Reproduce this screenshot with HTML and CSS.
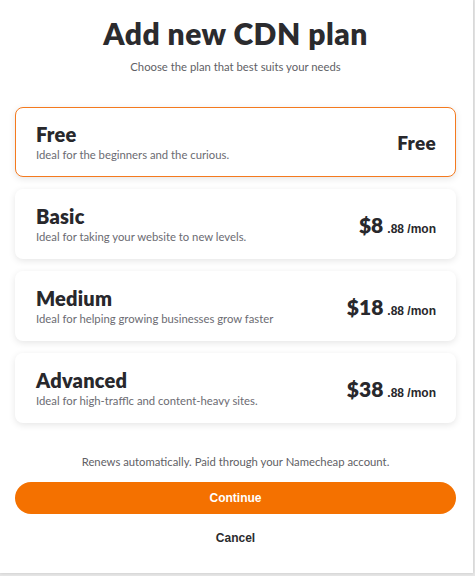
FILE: index.html
```html
<!DOCTYPE html>
<html>
<head>
<meta charset="utf-8">
<link rel="stylesheet" href="styles.css">
</head>
<body>
<div class="dialog">
  <h1 class="title">Add new CDN plan</h1>
  <p class="subtitle">Choose the plan that best suits your needs</p>
  <div class="plans">
    <div class="plan selected">
      <div class="info">
        <div class="name">Free</div>
        <div class="desc">Ideal for the beginners and the curious.</div>
      </div>
      <div class="price"><span class="amount">Free</span></div>
    </div>
    <div class="plan">
      <div class="info">
        <div class="name">Basic</div>
        <div class="desc">Ideal for taking your website to new levels.</div>
      </div>
      <div class="price"><span class="amount">$8</span><span class="cents">.88 /mon</span></div>
    </div>
    <div class="plan">
      <div class="info">
        <div class="name">Medium</div>
        <div class="desc">Ideal for helping growing businesses grow faster</div>
      </div>
      <div class="price"><span class="amount">$18</span><span class="cents">.88 /mon</span></div>
    </div>
    <div class="plan">
      <div class="info">
        <div class="name">Advanced</div>
        <div class="desc">Ideal for high-trafflc and content-heavy sites.</div>
      </div>
      <div class="price"><span class="amount">$38</span><span class="cents">.88 /mon</span></div>
    </div>
  </div>
  <p class="note">Renews automatically. Paid through your Namecheap account.</p>
  <button class="continue">Continue</button>
  <button class="cancel">Cancel</button>
</div>
</body>
</html>
```
FILE: styles.css
```css
* { box-sizing: border-box; }
html, body { margin: 0; padding: 0; }
body {
  background: #e6e6e6;
  width: 475px;
  height: 576px;
  font-family: Lato, "Open Sans", sans-serif;
  color: #2b2b2b;
}
.dialog {
  width: 473px;
  height: 573px;
  background: #fff;
  display: flex;
  flex-direction: column;
  align-items: stretch;
  padding: 15px 17px 0 15px;
  box-shadow: 0 0 3px rgba(0,0,0,0.15);
}
.title {
  margin: 0;
  text-align: center;
  font-size: 30px;
  line-height: 36px;
  font-weight: 800;
  color: #2b2b2e;
  letter-spacing: 0.5px;
}
.subtitle {
  margin: 9px 0 0;
  text-align: center;
  font-size: 11.3px;
  line-height: 14px;
  color: #5f5f66;
}
.plans {
  margin-top: 33px;
  display: flex;
  flex-direction: column;
  gap: 12px;
}
.plan {
  height: 70px;
  border-radius: 8px;
  border: 1px solid transparent;
  box-shadow: 0 2px 7px rgba(0,0,0,0.10);
  display: flex;
  align-items: center;
  justify-content: space-between;
  padding: 0 19px 0 20px;
  background: #fff;
}
.plan.selected {
  border-color: #f47a1f;
}
.name {
  font-size: 20px;
  line-height: 22px;
  font-weight: 800;
  color: #28282c;
  letter-spacing: 0.2px;
}
.desc {
  margin-top: 3px;
  font-size: 11.3px;
  line-height: 14px;
  color: #6b6b72;
}
.price {
  display: flex;
  align-items: baseline;
  gap: 4px;
}
.amount {
  font-size: 21px;
  font-weight: 800;
  color: #28282c;
}
.selected .amount { font-size: 19px; letter-spacing: 0.3px; }
.cents {
  font-family: "Liberation Sans", Arial, sans-serif;
  font-size: 12px;
  font-weight: 700;
  color: #28282c;
}
.note {
  margin: 32px 0 0;
  text-align: center;
  font-size: 11.3px;
  line-height: 14px;
  color: #5f5f66;
}
.continue {
  margin-top: 13px;
  height: 32px;
  border: none;
  border-radius: 16px;
  background: #f47100;
  color: #fff;
  font-family: "Liberation Sans", Arial, sans-serif;
  font-weight: 700;
  font-size: 12px;
}
.cancel {
  margin-top: 16px;
  background: none;
  border: none;
  font-family: "Liberation Sans", Arial, sans-serif;
  font-weight: 700;
  font-size: 12px;
  color: #2b2b2e;
  padding: 0;
  height: 16px;
}
```
